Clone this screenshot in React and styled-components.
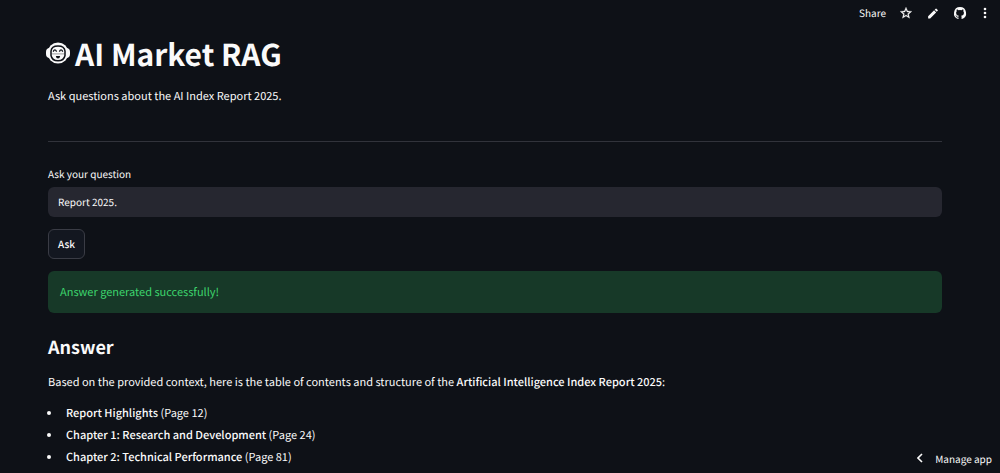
import React from 'react'
import styled, { createGlobalStyle } from 'styled-components'

const Bg = '#0e1117'
const Text = '#fafafa'
const Line = '#31333b'

const chapters = [
  { title: 'Report Highlights', page: 12 },
  { title: 'Chapter 1: Research and Development', page: 24 },
  { title: 'Chapter 2: Technical Performance', page: 81 },
]

const App = () => {
  return (
    <>
      <GlobalStyle />
      <Page>
        <Toolbar>
          <ToolButton>Share</ToolButton>
          <ToolButton aria-label="Favorite">
            <svg width="14" height="14" viewBox="0 0 24 24" fill="currentColor" stroke="currentColor" strokeWidth="0.5">
              <path d="M22 9.24l-7.19-.62L12 2 9.19 8.63 2 9.24l5.46 4.73L5.82 21 12 17.27 18.18 21l-1.63-7.03L22 9.24zM12 15.4l-3.76 2.27 1-4.28-3.32-2.88 4.38-.38L12 6.1l1.71 4.04 4.38.38-3.32 2.88 1 4.28L12 15.4z" />
            </svg>
          </ToolButton>
          <ToolButton aria-label="Edit">
            <svg width="14" height="13" viewBox="0 0 24 24" fill="currentColor">
              <path d="M3 17.25V21h3.75L17.81 9.94l-3.75-3.75L3 17.25zM20.71 7.04a1 1 0 0 0 0-1.41l-2.34-2.34a1 1 0 0 0-1.41 0l-1.83 1.83 3.75 3.75 1.83-1.83z" />
            </svg>
          </ToolButton>
          <ToolButton aria-label="View source">
            <svg width="14" height="14" viewBox="0 0 16 16" fill="currentColor">
              <path d="M8 1.2a7 7 0 0 0-2.2 13.6c.35.07.48-.15.48-.34v-1.3c-1.95.43-2.36-.83-2.36-.83-.32-.8-.78-1.02-.78-1.02-.63-.43.05-.42.05-.42.7.05 1.07.72 1.07.72.63 1.07 1.64.76 2.04.58.06-.45.25-.76.44-.93-1.55-.18-3.18-.78-3.18-3.46 0-.76.27-1.39.72-1.88-.07-.18-.31-.89.07-1.86 0 0 .59-.18 1.93.72a6.7 6.7 0 0 1 3.5 0c1.34-.9 1.93-.72 1.93-.72.38.97.14 1.68.07 1.86.45.49.72 1.12.72 1.88 0 2.69-1.64 3.28-3.19 3.45.25.22.47.64.47 1.3v1.92c0 .19.13.41.48.34A7 7 0 0 0 8 1.2z" />
            </svg>
          </ToolButton>
          <ToolButton aria-label="Menu">
            <svg width="10" height="12" viewBox="0 0 20 24" fill="currentColor">
              <circle cx="10" cy="4" r="2.6" />
              <circle cx="10" cy="12" r="2.6" />
              <circle cx="10" cy="20" r="2.6" />
            </svg>
          </ToolButton>
        </Toolbar>

        <Content>
          <Title>
            <Robot />
            AI Market RAG
          </Title>
          <Paragraph>Ask questions about the AI Index Report 2025.</Paragraph>
          <Divider />

          <Form onSubmit={(e) => e.preventDefault()}>
            <Label htmlFor="question">Ask your question</Label>
            <Input id="question" type="text" defaultValue="Report 2025." />
            <AskButton type="submit">Ask</AskButton>
          </Form>

          <Success role="status">Answer generated successfully!</Success>

          <Subtitle>Answer</Subtitle>
          <Paragraph>
            Based on the provided context, here is the table of contents and structure of the{' '}
            <b>Artificial Intelligence Index Report 2025</b>:
          </Paragraph>
          <List>
            {chapters.map((chapter) => (
              <li key={chapter.page}>
                <b>{chapter.title}</b> (Page {chapter.page})
              </li>
            ))}
          </List>
        </Content>

        <ManageButton>
          <svg width="6" height="10" viewBox="0 0 6 10" fill="none" stroke="currentColor" strokeWidth="1.6">
            <path d="M5 1L1 5l4 4" />
          </svg>
          Manage app
        </ManageButton>
      </Page>
    </>
  )
}

export default App

const Robot = () => (
  <svg width="24" height="22" viewBox="0 0 24 22" aria-hidden="true">
    <rect x="0" y="6" width="24" height="10" rx="4" fill={Text} />
    <ellipse cx="12" cy="11" rx="10.5" ry="10.5" fill={Text} />
    <path d="M5 9Q5.500 4 12 4t7 5v4.500Q18 18.800 12 18.800T5 13.500z" fill={Text} stroke={Bg} strokeWidth="1.5" />
    <path d="M7.200 9.600q1.600-3.400 3.400 0M13.400 9.600q1.600-3.400 3.400 0" fill="none" stroke={Bg} strokeWidth="1.300" />
    <path d="M5.500 11.900h13" stroke={Bg} strokeWidth="0.400" />
    <path d="M9.800 14h4.400q-.4 2.500-2.200 2.500T9.800 14z" fill={Bg} />
  </svg>
)

const GlobalStyle = createGlobalStyle`
  * {
    box-sizing: border-box;
  }
  html {
    background: ${Bg};
  }
  body {
    margin: 0;
    background: ${Bg};
    color: ${Text};
    font-family: "Noto Sans CJK SC", "Noto Sans", sans-serif;
    font-size: 11px;
    text-rendering: geometricPrecision;
    overflow: hidden;
  }
  button, input {
    font: inherit;
    color: inherit;
    text-rendering: inherit;
  }
  b {
    font-weight: 500;
  }
`

const Page = styled.div`
  height: 100vh;
  overflow: hidden;
`

const Toolbar = styled.header`
  display: flex;
  justify-content: flex-end;
  align-items: center;
  gap: 13px;
  height: 26px;
  padding-right: 10px;
`

const ToolButton = styled.button`
  display: flex;
  align-items: center;
  padding: 0;
  border: none;
  background: none;
  font-size: 10px;
  line-height: 14px;
  cursor: pointer;
`

const Content = styled.main`
  padding: 7px 58px 0 48px;
`

const Title = styled.h1`
  display: flex;
  align-items: center;
  gap: 5px;
  margin: 0 0 13px -2px;
  font-size: 30px;
  font-weight: 700;
  line-height: 40px;
`

const Paragraph = styled.p`
  margin: 0;
  line-height: 20px;
`

const Divider = styled.hr`
  margin: 35px 0 23px;
  border: none;
  border-top: 1px solid ${Line};
`

const Form = styled.form`
  display: flex;
  flex-direction: column;
  align-items: flex-start;
`

const Label = styled.label`
  margin-bottom: 4px;
  font-size: 10px;
  line-height: 18px;
`

const Input = styled.input`
  width: 100%;
  height: 30px;
  margin-bottom: 12px;
  padding: 0 10px 2px;
  border: none;
  border-radius: 6px;
  background: #262730;
  font-size: 10px;
  outline: none;
`

const AskButton = styled.button`
  height: 30px;
  margin-bottom: 12px;
  padding: 0 9px 2px;
  border: 1px solid #3a3c45;
  border-radius: 6px;
  background: #131720;
  font-size: 10px;
  font-weight: 500;
  cursor: pointer;
`

const Success = styled.div`
  margin-bottom: 20px;
  padding: 11px 12px;
  border-radius: 6px;
  background: #173928;
  color: #3dd56d;
  line-height: 20px;
`

const Subtitle = styled.h3`
  margin: 0 0 11px;
  font-size: 18px;
  font-weight: 700;
  line-height: 28px;
`

const List = styled.ul`
  margin: 10px 0 0;
  padding-left: 14px;
  line-height: 22px;

  li {
    padding-left: 4px;
  }
`

const ManageButton = styled.button`
  position: fixed;
  right: 0;
  bottom: 0;
  display: flex;
  align-items: center;
  gap: 12px;
  height: 28px;
  padding: 0 8px 2px;
  border: none;
  background: ${Bg};
  font-size: 10px;
  cursor: pointer;
`
